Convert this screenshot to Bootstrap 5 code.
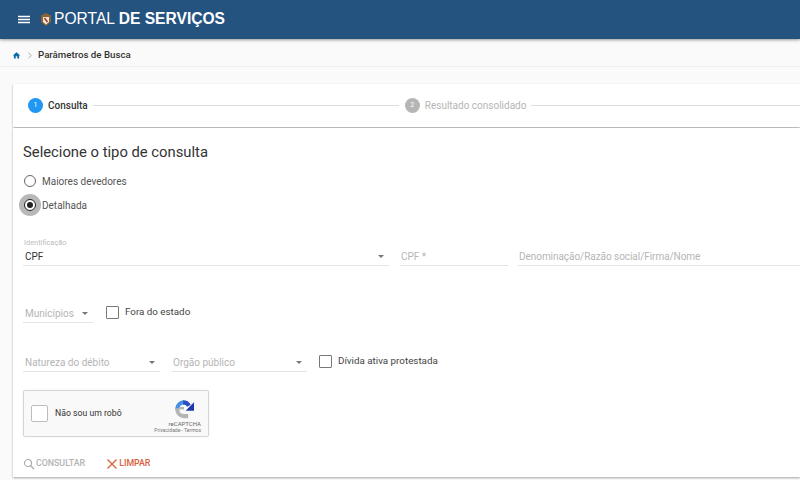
<!DOCTYPE html>
<html lang="pt-BR">
<head>
<meta charset="utf-8">
<title>Portal de Serviços</title>
<link href="https://cdn.jsdelivr.net/npm/bootstrap@5.3.0/dist/css/bootstrap.min.css" rel="stylesheet">
<style>
html,body{height:480px;overflow:hidden}
body{background:#fafafa;font-family:Roboto,"Liberation Sans",sans-serif;color:#333;font-size:10px}
.topbar{height:39px;background:#245380;box-shadow:0 1px 3px rgba(0,0,0,.4);padding-left:18px;color:#fff}
.menu-ico{width:12px;height:9px;margin-right:9px;display:block}
.crest{width:14px;height:15px;display:block;margin-right:1px}
.brand{font-size:15.6px;line-height:20px;font-family:"Liberation Sans",sans-serif;margin-top:-2px}
.crumbs{height:28px;border-bottom:1px solid #eee;padding:6px 0 0 12px;font-size:9.7px;font-weight:500;color:#333}
.home-ico{width:9px;height:9px;display:block;color:#0d6ea8;margin-right:6px}
.chev-ico{width:6px;height:7px;display:block;margin-right:5px}
.sheet{background:#fff;margin-left:13px;box-shadow:0 1px 2px rgba(0,0,0,.35)}
.stepper{margin-top:17px;height:43px;padding-left:15px}
.dot{width:15px;height:15px;border-radius:50%;font-size:7px;color:#fff;flex:none;margin-right:5px;line-height:15px;text-align:center}
.dot-on{background:#2196f3}
.dot-off{background:#b5b5b5}
.step-on{font-weight:500;color:#333;white-space:nowrap}
.step-off{color:#b5b5b5;white-space:nowrap;margin-right:5px}
.step-line{height:1px;background:#ddd}
.line-a{width:306px;margin:0 6px 0 5px;flex:none}
.panel{margin-top:1px;height:349px;padding:14px 0 0 10px}
.ttl{font-size:14.8px;font-weight:400;line-height:20px;margin:0;color:#333}
.rad{height:24px;color:#555}
.rad-first{margin-top:7px}
.ring{width:12px;height:12px;border:1.5px solid #666;border-radius:50%;flex:none;background:#fff}
.ring-wrap{width:22px;height:22px;margin-left:-4px;margin-right:1px;flex:none}
.ring-wrap-on{background:#b8b8b8;border-radius:50%}
.ring-on{border-color:#222}
.ring-on i{display:block;width:6px;height:6px;background:#222;border-radius:50%}
.mini{font-size:7.4px;color:#bbb;line-height:9px;margin-top:21px;padding-left:1px}
.fld{height:19px;border-bottom:1px solid #e4e4e4;color:#b5b5b5;padding:0 2px;flex:none}
.fld-main{color:#333;width:366px;margin-right:11px}
.fld-cpf{width:108px;margin-right:10px;padding-left:1px}
.fld-den{flex:1 1 auto;white-space:nowrap;letter-spacing:-.05px;padding-left:1px}
.caret{width:0;height:0;border-left:3.5px solid transparent;border-right:3.5px solid transparent;border-top:3.5px solid #777;margin-left:auto;margin-right:3px}
.row-one{height:19px}
.row-two{margin-top:34px;height:22px}
.fld-mun{width:70px;margin-right:13px;margin-top:4px}
.box{width:13px;height:13px;border:1.5px solid #777;border-radius:1px;margin-right:6px;flex:none;background:#fff}
.chk{color:#444;font-size:9.8px}
.chk-mid{margin-top:5px}
.row-three{margin-top:31px;height:24px}
.fld-nat{width:137px;margin-right:12px}
.fld-org{width:135px;margin-right:12px;padding-left:1px}
.chk-low{margin-top:1px}
.robot{width:186px;height:47px;margin:13px 0 0 0;background:#f9f9f9;border:1px solid #d6d6d6;border-radius:2px;box-shadow:0 0 2px rgba(0,0,0,.08);padding-left:7px}
.robot-box{width:17px;height:17px;border:1.5px solid #bdbdbd;border-radius:2px;background:#fff;margin-right:7px;flex:none}
.robot-txt{font-size:8.7px;color:#333}
.robot-logo{margin-left:auto;margin-right:7px;width:48px;margin-top:5px}
.robot-logo svg{width:20px;height:20px;display:block;margin-right:7px}
.robot-a{font-size:6px;line-height:7px;color:#666;margin-top:1px}
.robot-b{font-size:5px;line-height:6px;color:#777;white-space:nowrap}
.acts{margin-top:15px;height:24px;font-size:8.8px;font-weight:500}
.act-q{color:#b3b3b3;margin-right:21px}
.act-x{color:#d9603a}
.act-ico{width:12px;height:12px;display:block;margin-right:1px}
</style>
</head>
<body>
<header class="topbar d-flex align-items-center">
  <svg class="menu-ico" viewBox="0 0 12 9"><path d="M0 1.500h12M0 4.500h12M0 7.500h12" stroke="#fff" stroke-width="1.300"/></svg>
  <svg class="crest" viewBox="0 0 14 15"><path d="M7 1l5 2.500V10l-5 4-5-4V3.500z" fill="#8a6238"/><path d="M4 5h6v5l-3 2.500-3-2.500z" fill="#f0e6d8"/><path d="M5.500 6l3 4" stroke="#a33a28" stroke-width="1.500"/></svg>
  <div class="brand">PORTAL <b>DE SERVIÇOS</b></div>
</header>
<nav class="crumbs d-flex align-items-center">
  <svg class="home-ico" viewBox="0 0 24 24"><path fill="currentColor" d="M10 20v-6h4v6h5v-8h3L12 3 2 12h3v8z"/></svg>
  <svg class="chev-ico" viewBox="0 0 6 7"><path d="M1.500 .8L4.300 3.500 1.500 6.200" fill="none" stroke="#999" stroke-width=".8"/></svg>
  <span>Parâmetros de Busca</span>
</nav>
<section class="sheet stepper d-flex align-items-center">
  <span class="dot dot-on">1</span><span class="step-on">Consulta</span>
  <span class="step-line line-a"></span>
  <span class="dot dot-off">2</span><span class="step-off">Resultado consolidado</span>
  <span class="step-line flex-grow-1"></span>
</section>
<main class="sheet panel">
  <h1 class="ttl">Selecione o tipo de consulta</h1>
  <div class="rad rad-first d-flex align-items-center"><span class="ring-wrap d-flex align-items-center justify-content-center"><span class="ring"></span></span>Maiores devedores</div>
  <div class="rad d-flex align-items-center"><span class="ring-wrap ring-wrap-on d-flex align-items-center justify-content-center"><span class="ring ring-on d-flex align-items-center justify-content-center"><i></i></span></span>Detalhada</div>
  <div class="mini">Identificação</div>
  <div class="row-one d-flex">
    <div class="fld fld-main d-flex align-items-center">CPF<span class="caret"></span></div>
    <div class="fld fld-cpf d-flex align-items-center">CPF *</div>
    <div class="fld fld-den d-flex align-items-center">Denominação/Razão social/Firma/Nome</div>
  </div>
  <div class="row-two d-flex align-items-start">
    <div class="fld fld-mun d-flex align-items-center">Municípios<span class="caret"></span></div>
    <div class="chk chk-mid d-flex align-items-center"><span class="box"></span>Fora do estado</div>
  </div>
  <div class="row-three d-flex align-items-start">
    <div class="fld fld-nat d-flex align-items-center">Natureza do débito<span class="caret"></span></div>
    <div class="fld fld-org d-flex align-items-center">Orgão público<span class="caret"></span></div>
    <div class="chk chk-low d-flex align-items-center"><span class="box"></span>Dívida ativa protestada</div>
  </div>
  <div class="robot d-flex align-items-center">
    <span class="robot-box"></span>
    <span class="robot-txt">Não sou um robô</span>
    <div class="robot-logo d-flex flex-column align-items-end">
      <svg viewBox="0 0 24 24" fill="none">
        <path d="M4 13V11A8 8 0 0 1 12 4" stroke="#4a90e2" stroke-width="5"/>
        <path d="M11 4A8 8 0 0 1 18 8" stroke="#2a4fc0" stroke-width="5"/>
        <path d="M24 4v10H14z" fill="#1c3aa9"/>
        <path d="M4 11v2A8 8 0 0 0 12 20.500H17" stroke="#b5b5b5" stroke-width="5"/>
        <path d="M7 11h5" stroke="#b5b5b5" stroke-width="3"/>
      </svg>
      <span class="robot-a">reCAPTCHA</span>
      <span class="robot-b">Privacidade - Termos</span>
    </div>
  </div>
  <div class="acts d-flex align-items-center">
    <span class="act-q d-flex align-items-center"><svg class="act-ico" viewBox="0 0 12 12"><circle cx="5" cy="5" r="3.500" fill="none" stroke="#aaa" stroke-width="1.100"/><path d="M7.500 7.500L11 11" stroke="#aaa" stroke-width="1.300"/></svg>CONSULTAR</span>
    <span class="act-x d-flex align-items-center"><svg class="act-ico" viewBox="0 0 12 12"><path d="M1.500 1.500l9 9M10.500 1.500l-9 9" stroke="#d9603a" stroke-width="1.300"/></svg>LIMPAR</span>
  </div>
</main>
<script src="https://cdn.jsdelivr.net/npm/bootstrap@5.3.0/dist/js/bootstrap.bundle.min.js"></script>
</body>
</html>
